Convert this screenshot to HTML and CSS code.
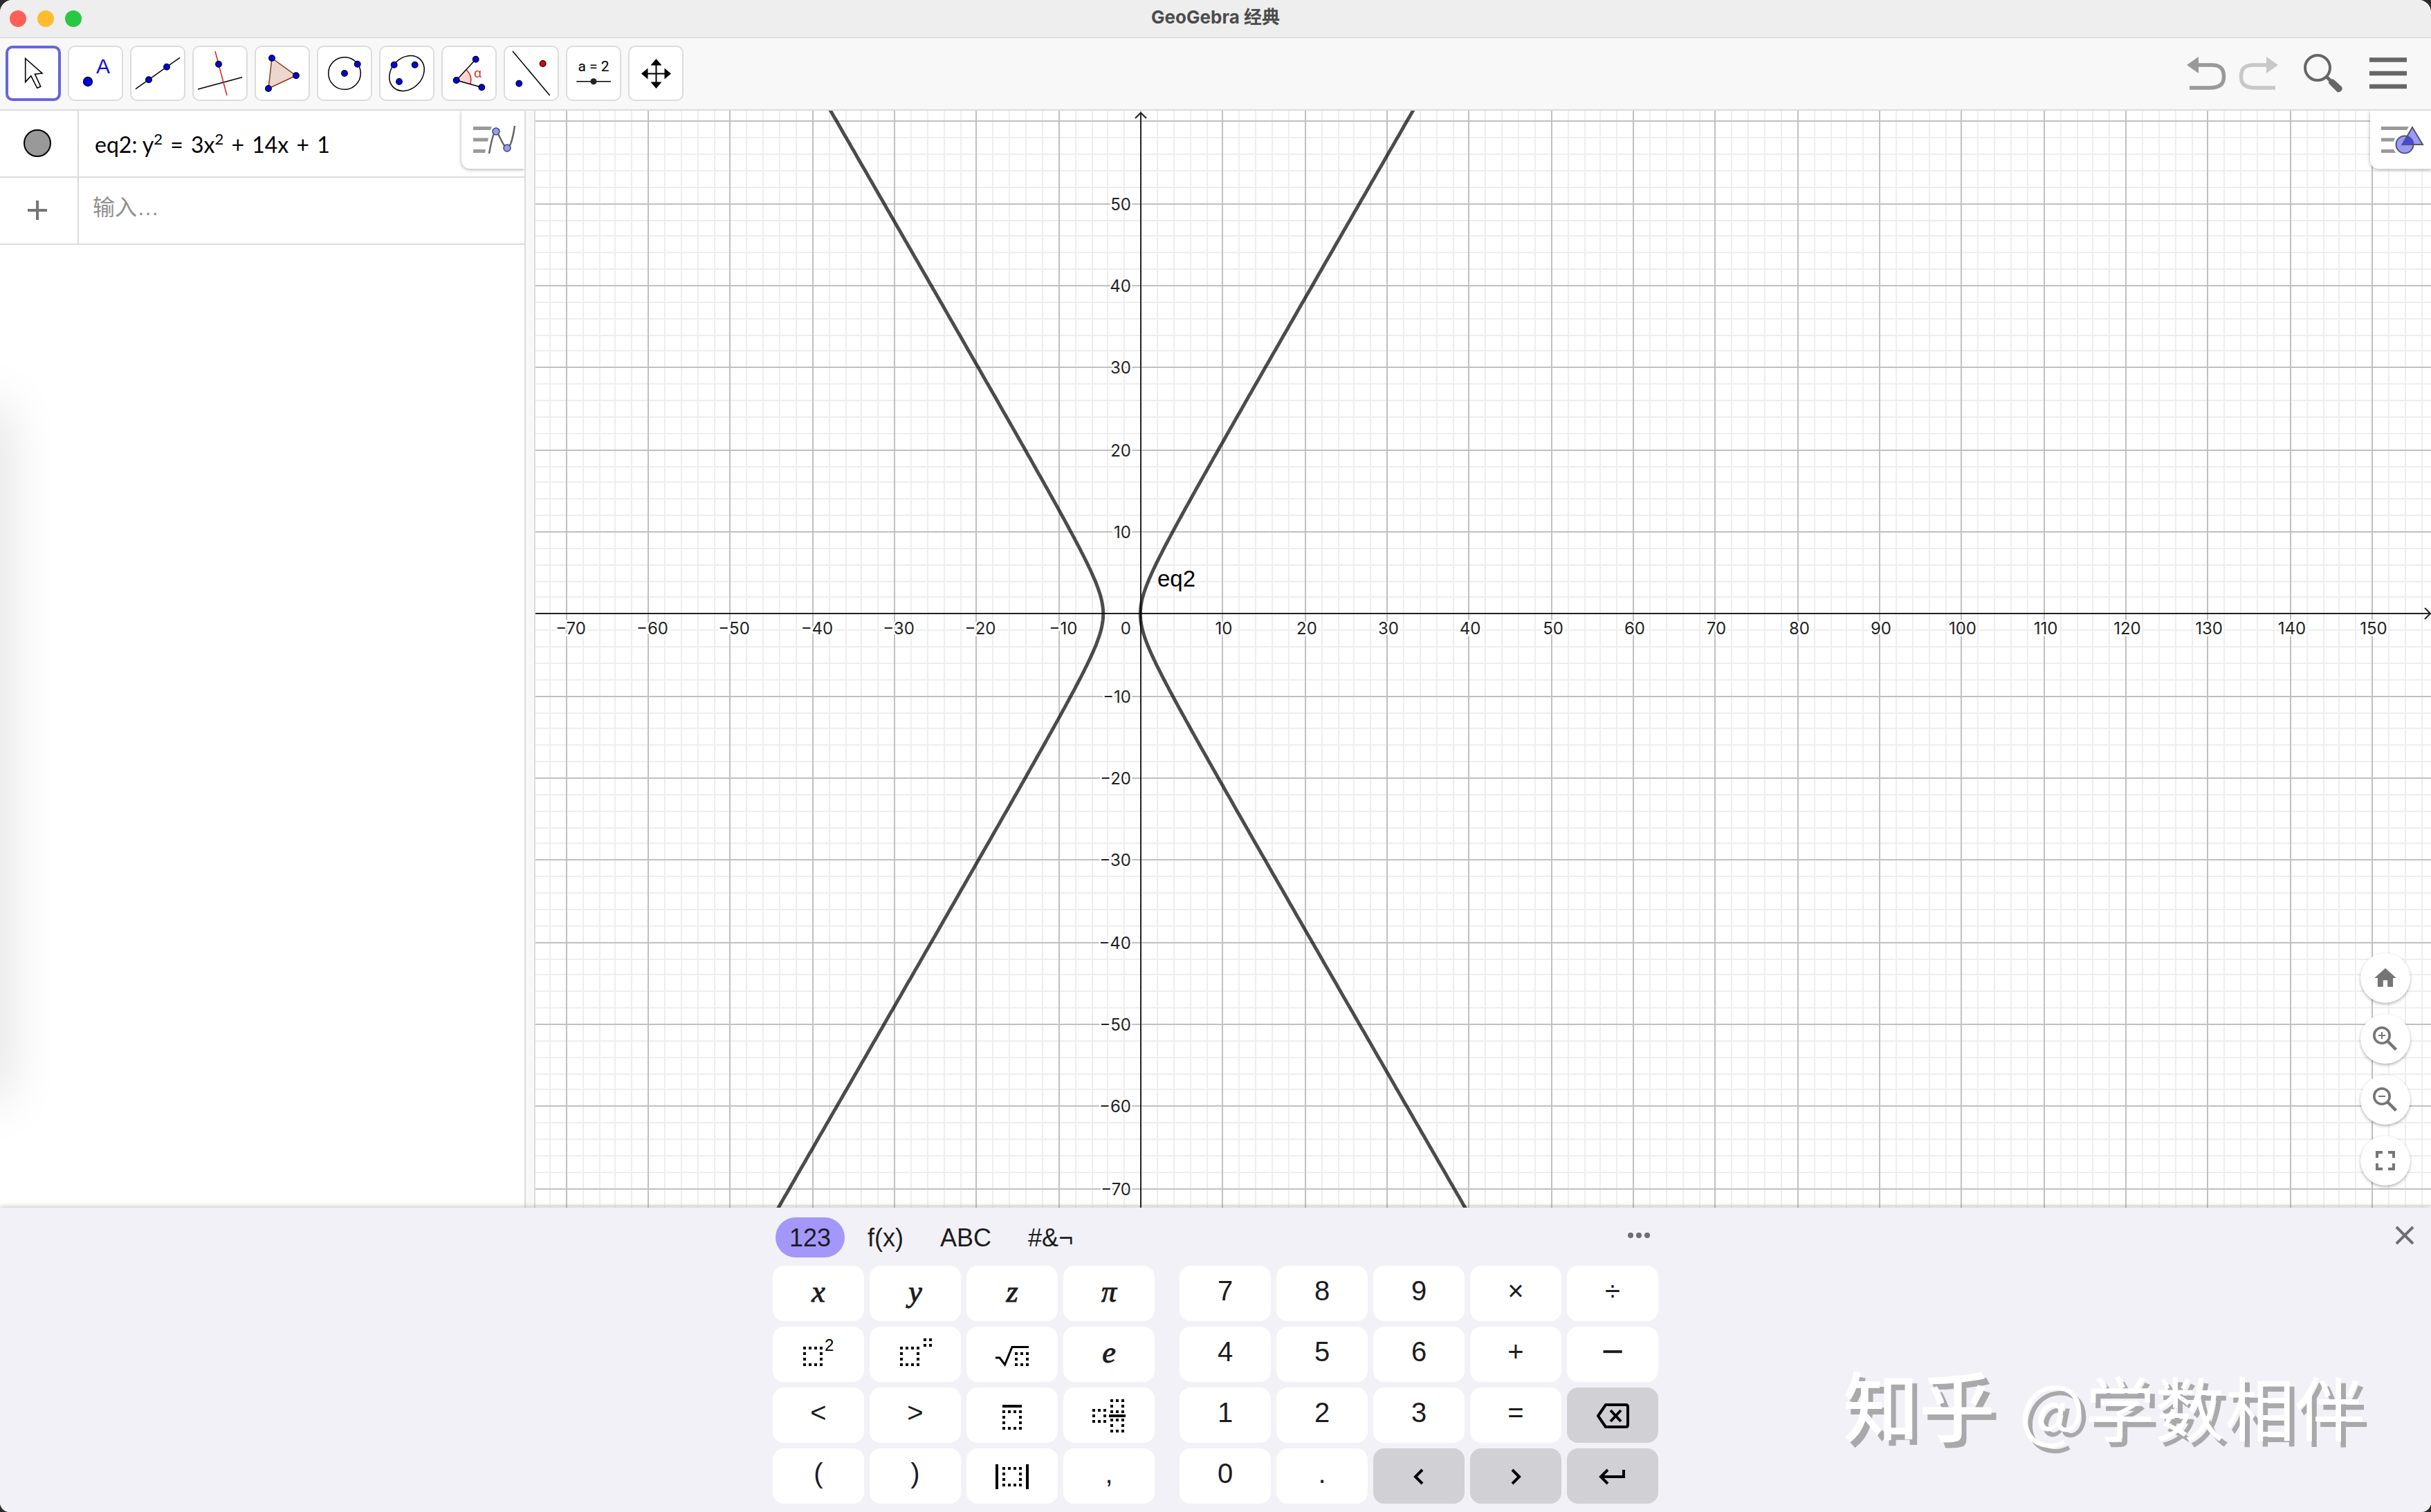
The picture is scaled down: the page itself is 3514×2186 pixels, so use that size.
FILE: index.html
```html
<!DOCTYPE html>
<html lang="zh-CN">
<head>
    <meta charset="UTF-8">
    <meta name="viewport" content="width=device-width, initial-scale=1.0">
    <title>GeoGebra 经典</title>
    <link rel="stylesheet" href="styles.css">
</head>
<body>

    <!-- Shared dotted placeholder boxes used by the keyboard icons -->
    <svg class="defs" aria-hidden="true">
        <defs>
            <path id="box4" d="M0 2h28M0 26h28M2 8v16M26 8v16" stroke="#000" stroke-width="4" stroke-dasharray="4 4" fill="none"/>
            <path id="box3" d="M0 2h20M0 18h20M2 8v4M18 8v4" stroke="#000" stroke-width="4" stroke-dasharray="4 4" fill="none"/>
        </defs>
    </svg>

    <div class="window">
        <header class="titlebar">
            <div class="lights">
                <button class="light light-close" aria-label="关闭"></button>
                <button class="light light-min" aria-label="最小化"></button>
                <button class="light light-max" aria-label="全屏"></button>
            </div>
            <h1>GeoGebra 经典</h1>
        </header>

        <!-- Toolbar -->
        <nav class="toolbar">
            <div class="tools">
                <button class="tool selected" aria-label="移动">
                    <svg viewBox="4 4 72 72"><path d="M28.7 18.5L53 40L42.5 41.2L50.7 59L45.7 61.3L36.8 43.7L28.7 52.6Z" fill="#fff" stroke="#000" stroke-width="1.6"/></svg>
                </button>
                <button class="tool" aria-label="点">
                    <svg viewBox="4 4 72 72"><circle class="pt" cx="29" cy="52" r="6.5"/><text class="tool-a" x="41" y="40">A</text></svg>
                </button>
                <button class="tool" aria-label="直线">
                    <svg viewBox="4 4 72 72"><path class="ln" d="M8 62.7L72 17.3"/><circle class="pt" cx="27" cy="49.3" r="4.3"/><circle class="pt" cx="53" cy="30.7" r="4.3"/></svg>
                </button>
                <button class="tool" aria-label="垂线">
                    <svg viewBox="4 4 72 72"><path class="ln" d="M8 63L72 45.7"/><path class="ln red" d="M33 8L50 72"/><circle class="pt" cx="38" cy="26.7" r="4.3"/></svg>
                </button>
                <button class="tool" aria-label="多边形">
                    <svg viewBox="4 4 72 72"><path d="M25 18L60 43.3L20 62Z" fill="#ecd6d0" stroke="#8b3a12" stroke-width="1.5"/><circle class="pt" cx="25" cy="18" r="4.3"/><circle class="pt" cx="60" cy="43.3" r="4.3"/><circle class="pt" cx="20" cy="62" r="4.3"/></svg>
                </button>
                <button class="tool" aria-label="圆">
                    <svg viewBox="4 4 72 72"><circle class="ln" cx="40" cy="40" r="23.3"/><circle class="pt" cx="40" cy="40" r="4.3"/><circle class="pt" cx="58.7" cy="26.7" r="4.3"/></svg>
                </button>
                <button class="tool" aria-label="椭圆">
                    <svg viewBox="4 4 72 72"><ellipse class="ln" cx="40" cy="40" rx="28" ry="22.4" transform="rotate(-46 40 40)"/><circle class="pt" cx="21.7" cy="27.7" r="4.3"/><circle class="pt" cx="51.7" cy="27.7" r="4.3"/><circle class="pt" cx="29" cy="52" r="4.3"/></svg>
                </button>
                <button class="tool" aria-label="角度">
                    <svg viewBox="4 4 72 72"><path d="M21.7 50L36.3 35A21 21 0 0 1 42.2 55Z" fill="#ffd4d4"/><path d="M36.3 35A21 21 0 0 1 42.2 55" fill="none" stroke="#d6232a" stroke-width="1.6"/><path class="ln" d="M49.7 19.7L21.7 50L58.3 60.3"/><circle class="pt" cx="21.7" cy="50" r="4.3"/><circle class="pt" cx="49.7" cy="19.7" r="4.3"/><circle class="pt" cx="58.3" cy="60.3" r="4.3"/><text class="tool-alpha" x="47" y="46">α</text></svg>
                </button>
                <button class="tool" aria-label="轴对称">
                    <svg viewBox="4 4 72 72"><path class="ln" d="M13 8L66.7 72"/><circle class="pt red-pt" cx="56.7" cy="26" r="4.3"/><circle class="pt" cx="22.3" cy="54.7" r="4.3"/></svg>
                </button>
                <button class="tool" aria-label="滑动条">
                    <svg viewBox="4 4 72 72"><text class="tool-slider" x="40" y="37" text-anchor="middle">a = 2</text><path class="ln" d="M15.3 51.7H65"/><circle cx="40" cy="51.7" r="4.5" fill="#222"/></svg>
                </button>
                <button class="tool" aria-label="平移视图">
                    <svg viewBox="4 4 72 72"><path d="M40.5 24V57M24 40.5H57" stroke="#000" stroke-width="2"/><path d="M40.5 19l8 9.5h-16zM40.5 62l8-9.5h-16zM19 40.5l9.5-8v16zM62 40.5l-9.5-8v16z"/></svg>
                </button>
            </div>
            <div class="actions">
                <button class="action" aria-label="撤销">
                    <svg class="undo" viewBox="0 0 58 54"><path d="M0 15L17 3V27Z" fill="#999"/><path d="M16 15H36C49 15 53.500 21 53.500 31.500S49 48 32 48H4" fill="none" stroke="#999" stroke-width="5.500"/></svg>
                </button>
                <button class="action redo" aria-label="重做">
                    <svg class="undo" viewBox="0 0 58 54"><path d="M58 15L41 3V27Z" fill="#c8c8c8"/><path d="M42 15H22C9 15 4.500 21 4.500 31.500S9 48 26 48H54" fill="none" stroke="#c8c8c8" stroke-width="5.500"/></svg>
                </button>
                <button class="action" aria-label="搜索">
                    <svg class="search" viewBox="0 0 58 58"><circle cx="20" cy="21" r="18" fill="none" stroke="#666" stroke-width="4"/><path d="M32 33L40 41" stroke="#666" stroke-width="5"/><path d="M36 41.500L40.500 37.500Q42 37 43.500 38L54.500 48Q57 51 54.500 54T48.500 56L37 44.500Q35.500 43 36 41.500Z" fill="#666"/></svg>
                </button>
                <button class="action" aria-label="菜单">
                    <svg class="menu" viewBox="0 0 54 46"><path d="M0 3.500H54M0 23H54M0 42H54" stroke="#666" stroke-width="6.500"/></svg>
                </button>
            </div>
        </nav>

        <main class="workspace">
            <!-- Algebra view -->
            <section class="algebra">
                <div class="row">
                    <div class="row-head">
                        <button class="marble" aria-label="显示或隐藏 eq2"></button>
                    </div>
                    <div class="expression">eq2: y<sup>2</sup> <i class="op">=</i> 3x<sup>2</sup> <i class="op">+</i> 14x <i class="op">+</i> 1</div>
                    <button class="style-btn" aria-label="代数区样式">
                        <svg viewBox="0 0 91 84"><path d="M17 23h27l-2 5H17zM17 39.500h22l-1 5H17zM17 56h18l-1 5H17z" fill="#999"/><path d="M40 62C44 40 47 30 50 30S61 54 66 54S75 36 77 22" fill="none" stroke="#666" stroke-width="2.500"/><circle cx="50" cy="30" r="5" fill="#9999f5" stroke="#444466" stroke-width="1.500"/><circle cx="66" cy="54" r="5" fill="#9999f5" stroke="#444466" stroke-width="1.500"/></svg>
                    </button>
                </div>
                <div class="row">
                    <div class="row-head">
                        <svg class="plus" viewBox="0 0 28 28"><path d="M14 0V28M0 14H28" stroke="#757575" stroke-width="4"/></svg>
                    </div>
                    <input class="new-input" type="text" placeholder="输入…" aria-label="输入">
                </div>
            </section>

            <div class="splitter"></div>

            <!-- Graphics view -->
            <section class="graphics">
                <svg id="plot" class="plot"></svg>
                <button class="style-btn" aria-label="绘图区样式">
                    <svg viewBox="0 0 88 84"><path d="M16 23h40l-3 5H16zM16 39.500h20l-2 5H16zM16 56h18l3 5H16z" fill="#999"/><circle cx="50" cy="49" r="12.500" fill="#9999ff"/><path d="M61 24L76 49H46.500Z" fill="#9999ff"/><path d="M54 37.500A12.500 12.500 0 0 1 62.500 49H46.500Z" fill="#4545f0"/><g fill="none" stroke="#555566" stroke-width="2"><circle cx="50" cy="49" r="12.500"/><path d="M61 24L76 49H46.500Z"/></g></svg>
                </button>
                <div class="view-buttons">
                    <button class="round" aria-label="标准视图">
                        <svg class="icon-home" viewBox="0 0 24 24"><path d="M10 20v-6h4v6h5v-8h3L12 3 2 12h3v8z" fill="#757575"/></svg>
                    </button>
                    <button class="round" aria-label="放大">
                        <svg class="icon-zoom" viewBox="-20 -20 40 40"><g fill="none" stroke="#757575"><circle cx="-5" cy="-5" r="11.200" stroke-width="3.600"/><path d="M3.500 3.500L15.500 15.500" stroke-width="4.500"/><path d="M-10 -5H0M-5 -10V0" stroke-width="2"/></g></svg>
                    </button>
                    <button class="round" aria-label="缩小">
                        <svg class="icon-zoom" viewBox="-20 -20 40 40"><g fill="none" stroke="#757575"><circle cx="-5" cy="-5" r="11.200" stroke-width="3.600"/><path d="M3.500 3.500L15.500 15.500" stroke-width="4.500"/><path d="M-10 -5H0" stroke-width="2"/></g></svg>
                    </button>
                    <button class="round" aria-label="全屏">
                        <svg class="icon-full" viewBox="0 0 24 24"><path d="M7 14H5v5h5v-2H7v-3zm-2-4h2V7h3V5H5v5zm12 7h-3v2h5v-5h-2v3zM14 5v2h3v3h2V5h-5z" fill="#757575"/></svg>
                    </button>
                </div>
            </section>
        </main>

        <!-- On-screen keyboard -->
        <section class="keyboard">
            <button class="close" aria-label="关闭键盘">
                <svg viewBox="0 0 28 28"><path d="M2 2L26 26M26 2L2 26" stroke="#6e6e73" stroke-width="4"/></svg>
            </button>
            <div class="keyboard-inner">
                <div class="tabs">
                    <button class="tab active">123</button>
                    <button class="tab">f(x)</button>
                    <button class="tab">ABC</button>
                    <button class="tab">#&amp;¬</button>
                    <button class="more" aria-label="更多">
                        <svg viewBox="0 0 34 10"><g fill="#6e6e73"><circle cx="5" cy="5" r="4"/><circle cx="17" cy="5" r="4"/><circle cx="29" cy="5" r="4"/></g></svg>
                    </button>
                </div>
                <div class="pads">
                    <div class="pad pad-math">
                        <button class="key math">x</button>
                        <button class="key math">y</button>
                        <button class="key math">z</button>
                        <button class="key math">π</button>
                        <button class="key icon" aria-label="平方"><svg viewBox="-32 -32 64 64"><use href="#box4" x="-22" y="-11"/><text class="exp" x="9" y="-5">2</text></svg></button>
                        <button class="key icon" aria-label="幂"><svg viewBox="-32 -32 64 64"><use href="#box4" x="-22" y="-11"/><path d="M12 -21h12M12 -13h12" stroke="#000" stroke-width="4" stroke-dasharray="4 4"/></svg></button>
                        <button class="key icon" aria-label="平方根"><svg viewBox="-32 -32 64 64"><path d="M-24 5H-18L-10.500 15L0 -10.500H24" fill="none" stroke="#000" stroke-width="3"/><use href="#box3" x="4" y="-3"/></svg></button>
                        <button class="key math">e</button>
                        <button class="key">&lt;</button>
                        <button class="key">&gt;</button>
                        <button class="key icon" aria-label="循环小数"><svg viewBox="-32 -32 64 64"><path d="M-14 -13H14" stroke="#000" stroke-width="4"/><use href="#box4" x="-14" y="-7"/></svg></button>
                        <button class="key icon" aria-label="带分数"><svg viewBox="-32 -32 64 64"><use href="#box3" x="-24" y="-9"/><use href="#box3" x="2" y="-23"/><path d="M0 1H24" stroke="#000" stroke-width="4"/><use href="#box3" x="2" y="5"/></svg></button>
                        <button class="key">(</button>
                        <button class="key">)</button>
                        <button class="key icon" aria-label="绝对值"><svg viewBox="-32 -32 64 64"><path d="M-22 -17V19M22 -17V19" stroke="#000" stroke-width="4"/><use href="#box4" x="-14" y="-13"/></svg></button>
                        <button class="key">,</button>
                    </div>
                    <div class="pad pad-num">
                        <button class="key">7</button>
                        <button class="key">8</button>
                        <button class="key">9</button>
                        <button class="key">×</button>
                        <button class="key">÷</button>
                        <button class="key">4</button>
                        <button class="key">5</button>
                        <button class="key">6</button>
                        <button class="key">+</button>
                        <button class="key minus">−</button>
                        <button class="key">1</button>
                        <button class="key">2</button>
                        <button class="key">3</button>
                        <button class="key">=</button>
                        <button class="key icon dark" aria-label="退格"><svg viewBox="-32 -32 64 64"><g fill="none" stroke="#000" stroke-width="4"><path d="M-10 -15H19Q22 -15 22 -12V14Q22 17 19 17H-10L-21 1Z" stroke-linejoin="round"/><path d="M-3 -7L12 9M12 -7L-3 9"/></g></svg></button>
                        <button class="key">0</button>
                        <button class="key">.</button>
                        <button class="key icon dark" aria-label="左"><svg viewBox="-32 -32 64 64"><path d="M5 -9L-5 1L5 11" fill="none" stroke="#000" stroke-width="4"/></svg></button>
                        <button class="key icon dark" aria-label="右"><svg viewBox="-32 -32 64 64"><path d="M-5 -9L5 1L-5 11" fill="none" stroke="#000" stroke-width="4"/></svg></button>
                        <button class="key icon dark" aria-label="回车"><svg viewBox="-32 -32 64 64"><path d="M-7 -9L-17 1L-7 11M-17 1H16V-9" fill="none" stroke="#000" stroke-width="4"/></svg></button>
                    </div>
                </div>
            </div>
            <div class="watermark"><b>知乎</b> @学数相伴</div>
        </section>
    </div>

    <script src="plot.js"></script>
</body>
</html>
```

FILE: styles.css
```css
* {
    box-sizing: border-box;
}

body {
    margin: 0;
    background-color: #2b2b2b;
    font-family: "Liberation Sans", "Noto Sans CJK SC", sans-serif;
    color: #1c1c1f;
}

button {
    margin: 0;
    padding: 0;
    border: none;
    background: none;
    font-family: inherit;
    color: inherit;
    cursor: pointer;
}

svg {
    display: block;
}

.defs {
    position: absolute;
    width: 0;
    height: 0;
}

.window {
    display: flex;
    flex-direction: column;
    min-height: 100vh;
    border-radius: 18px 18px 14px 14px;
    overflow: hidden;
    background-color: #fff;
}

/* Title bar */
.titlebar {
    display: grid;
    grid-template-columns: 1fr auto 1fr;
    align-items: center;
    height: 55px;
    padding: 0 14px;
    background-color: #eee;
    border-bottom: 1px solid #d2d2d2;
}

.titlebar h1 {
    margin: 0;
    padding-bottom: 4px;
    font-family: Inter, "Noto Sans CJK SC", sans-serif;
    font-size: 26px;
    line-height: 32px;
    font-weight: 700;
    color: #4c4c4c;
}

.lights {
    display: flex;
    gap: 16px;
}

.light {
    width: 24px;
    height: 24px;
    border-radius: 50%;
}

.light-close { background-color: #ff5f57; }
.light-min { background-color: #febc2e; }
.light-max { background-color: #28c840; }

/* Toolbar */
.toolbar {
    display: flex;
    justify-content: space-between;
    align-items: center;
    height: 105px;
    padding: 0 35px 2px 8px;
    background-color: #f8f8f8;
    border-bottom: 2px solid #dcdcdc;
}

.tools {
    display: flex;
    gap: 10px;
}

.tool {
    display: flex;
    align-items: center;
    justify-content: center;
    width: 80px;
    height: 80px;
    background-color: #fff;
    border: 2px solid #dcdcdc;
    border-radius: 10px;
}

.tool.selected {
    border: 4px solid #6565e0;
}

.tool svg {
    flex: none;
    width: 72px;
    height: 72px;
}

.ln {
    fill: none;
    stroke: #000;
    stroke-width: 1.5px;
}

.ln.red {
    stroke: #d6232a;
}

.pt {
    fill: #0000e6;
    stroke: #000;
    stroke-width: 1.3px;
}

.red-pt {
    fill: #e60000;
}

.tool-a {
    font-size: 30px;
    fill: #1010d8;
}

.tool-alpha {
    font-family: "Open Sans", sans-serif;
    font-size: 18px;
    fill: #d6232a;
}

.tool-slider {
    font-family: Roboto, sans-serif;
    font-size: 21px;
}

.actions {
    display: flex;
    align-items: center;
    gap: 37px;
}

.redo {
    margin-left: -21px;
}

.undo {
    width: 58px;
    height: 54px;
}

.search {
    width: 58px;
    height: 58px;
}

.menu {
    width: 54px;
    height: 46px;
}

/* Main area */
.workspace {
    flex: 1;
    display: grid;
    grid-template-columns: 758px 16px 1fr;
}

.algebra {
    position: relative;
    overflow: hidden;
}

/* Soft shadow falling in from the left edge */
.algebra::before {
    content: "";
    position: absolute;
    top: 27%;
    bottom: 10%;
    left: -40px;
    width: 40px;
    box-shadow: 0 0 80px rgba(0, 0, 0, 0.2);
}

.row {
    position: relative;
    display: flex;
    height: 97px;
    border-bottom: 2px solid #dcdcdc;
}

.row-head {
    display: flex;
    align-items: center;
    justify-content: center;
    width: 114px;
    padding: 0 4px 2px 0;
    border-right: 2px solid #dcdcdc;
}

.marble {
    width: 40px;
    height: 40px;
    border: 2px solid #000;
    border-radius: 50%;
    background-color: #999;
}

.plus {
    width: 28px;
    height: 28px;
}

.expression {
    padding-left: 23px;
    font-family: Lato, sans-serif;
    font-size: 32px;
    line-height: 97px;
    color: #000;
    white-space: nowrap;
}

.expression sup {
    font-size: 22px;
    line-height: 0;
}

.expression .op {
    padding: 0 3px;
    font-style: normal;
}

.new-input {
    flex: 1;
    min-width: 0;
    padding: 0 0 8px 20px;
    border: none;
    outline: none;
    background: none;
    font-family: "Liberation Sans", "Noto Sans CJK SC", sans-serif;
    font-size: 32px;
}

.new-input::placeholder {
    color: #8f8f8f;
    opacity: 1;
}

.style-btn {
    position: absolute;
    top: 0;
    right: 0;
    background-color: #fff;
    border-bottom-left-radius: 12px;
    box-shadow: 0 1px 5px rgba(0, 0, 0, 0.35);
}

.style-btn svg {
    height: 84px;
}

.splitter {
    background-color: #f8f8f8;
    border-left: 2px solid #dcdcdc;
    border-right: 2px solid #dcdcdc;
}

.graphics {
    position: relative;
    overflow: hidden;
}

.plot {
    position: absolute;
    width: 100%;
    height: 100%;
}

.minor {
    stroke: #eee;
    stroke-width: 2px;
}

.major {
    stroke: #c0c0c0;
    stroke-width: 2px;
}

.axis {
    fill: none;
    stroke: #222;
    stroke-width: 2px;
}

.curve {
    fill: none;
    stroke: #000;
    stroke-opacity: 0.7;
    stroke-width: 5px;
}

.tick {
    font-family: Inter, sans-serif;
    font-size: 24px;
    fill: #222;
    stroke: #fff;
    stroke-width: 5px;
    paint-order: stroke;
}

.curve-label {
    font-size: 33px;
    fill: #000;
}

.view-buttons {
    position: absolute;
    right: 30px;
    bottom: 32px;
    display: flex;
    flex-direction: column;
    gap: 16px;
}

.round {
    display: flex;
    align-items: center;
    justify-content: center;
    width: 72px;
    height: 72px;
    border-radius: 50%;
    background-color: #fff;
    box-shadow: 0 2px 4px rgba(0, 0, 0, 0.3);
}

.icon-home {
    width: 38px;
    height: 38px;
}

.icon-zoom {
    width: 40px;
    height: 40px;
}

.icon-full {
    width: 48px;
    height: 48px;
}

/* Keyboard */
.keyboard {
    position: relative;
    padding: 14px 16px 12px;
    background-color: #f2f1f7;
    box-shadow: 0 0 8px rgba(0, 0, 0, 0.3);
}

.keyboard-inner {
    max-width: 1280px;
    margin: 0 auto;
}

.tabs {
    display: flex;
    gap: 13px;
    margin-bottom: 12px;
    padding: 0 11px 0 4px;
}

.tab {
    height: 58px;
    padding: 1px 20px 0;
    border-radius: 29px;
    font-size: 36px;
    line-height: 58px;
}

.tab.active {
    background-color: #a397fa;
}

.more {
    margin-left: auto;
    padding-bottom: 6px;
}

.more svg {
    width: 34px;
    height: 10px;
}

.close {
    position: absolute;
    top: 26px;
    right: 24px;
}

.close svg {
    width: 28px;
    height: 28px;
}

.pads {
    display: grid;
    grid-template-columns: 552fr 692fr;
    gap: 36px;
}

.pad {
    display: grid;
    gap: 8px;
}

.pad-math {
    grid-template-columns: repeat(4, 1fr);
}

.pad-num {
    grid-template-columns: repeat(5, 1fr);
}

.key {
    display: flex;
    align-items: center;
    justify-content: center;
    height: 80px;
    padding-bottom: 8px;
    border-radius: 16px;
    background-color: #fff;
    font-size: 40px;
    line-height: 48px;
}

.key.math {
    padding-bottom: 4px;
    font-family: "Liberation Serif", serif;
    font-style: italic;
    font-size: 44px;
    -webkit-text-stroke: 1px #1c1c1f;
}

.key.minus {
    font-size: 56px;
}

.key.icon {
    padding-bottom: 0;
}

.key.icon svg {
    width: 64px;
    height: 64px;
}

.key.dark {
    background-color: #d1d0d5;
}

.exp {
    font-size: 24px;
}

.watermark {
    position: absolute;
    right: 96px;
    bottom: 80px;
    font-family: "Noto Sans CJK SC", sans-serif;
    font-size: 101px;
    line-height: 148px;
    color: #fff;
    text-shadow: 7px 8px 0 #a9a9ab;
    white-space: nowrap;
    pointer-events: none;
}

.watermark b {
    padding-right: 12px;
    font-size: 110px;
    font-weight: 500;
}
```

FILE: plot.js
```js
// --- View settings ---
const plot = document.getElementById('plot');
const UNIT = 356 / 30;      // pixels per unit
const ORIGIN_X = 874.2;
const ORIGIN_Y = 726.6;

// --- Helpers ---
function add(tag, attrs, text) {
    const el = document.createElementNS('http://www.w3.org/2000/svg', tag);
    for (const key in attrs) {
        el.setAttribute(key, attrs[key]);
    }
    if (text !== undefined) {
        el.textContent = text;
    }
    plot.appendChild(el);
}

// Snap to the middle of a two pixel line
function snap(value) {
    return Math.round(value / 2) * 2 + 1;
}

const px = x => ORIGIN_X + x * UNIT;
const py = y => ORIGIN_Y - y * UNIT;

// One branch of y^2 = 3x^2 + 14x + 1, solved for x
function branch(sign) {
    const points = [];
    for (let y = -76; y <= 76; y += 0.25) {
        const x = (-14 + sign * Math.sqrt(196 - 12 * (1 - y * y))) / 6;
        points.push(`${(px(x) + 1).toFixed(1)} ${(py(y) + 1).toFixed(1)}`);
    }
    return 'M' + points.join('L');
}

function label(n) {
    return n < 0 ? '−' + -n : String(n);
}

function draw() {
    const width = plot.clientWidth;
    const height = plot.clientHeight;
    plot.textContent = '';

    const left = Math.ceil(-ORIGIN_X / UNIT / 2) * 2;
    const right = (width - ORIGIN_X) / UNIT;
    const bottom = Math.ceil((ORIGIN_Y - height) / UNIT / 2) * 2;
    const top = ORIGIN_Y / UNIT;

    // Grid, minor lines first
    for (const type of ['minor', 'major']) {
        for (let x = left; x <= right; x += 2) {
            if ((x % 10 === 0) === (type === 'major')) {
                add('path', { class: type, d: `M${snap(px(x))} 0V${height}` });
            }
        }
        for (let y = bottom; y <= top; y += 2) {
            if ((y % 10 === 0) === (type === 'major')) {
                add('path', { class: type, d: `M0 ${snap(py(y))}H${width}` });
            }
        }
    }

    // Axes with arrow heads
    const ax = snap(px(0));
    const ay = snap(py(0));
    add('path', { class: 'axis', d: `M${ax} ${height}V3M${ax - 8} 11L${ax} 3L${ax + 8} 11` });
    add('path', { class: 'axis', d: `M0 ${ay}H${width - 1}M${width - 9} ${ay - 8}L${width - 1} ${ay}L${width - 9} ${ay + 8}` });

    // Tick labels
    for (let x = Math.ceil(left / 10) * 10; x <= right; x += 10) {
        if (x !== 0) {
            add('text', { class: 'tick', x: snap(px(x)) + (x < 0 ? 6 : 2), y: ay + 30, 'text-anchor': 'middle' }, label(x));
        }
    }
    for (let y = Math.ceil(bottom / 10) * 10; y < top - 5; y += 10) {
        add('text', { class: 'tick', x: ax - 14, y: snap(py(y)) + (y === 0 ? 30 : 9), 'text-anchor': 'end' }, label(y));
    }

    add('path', { class: 'curve', d: branch(-1) });
    add('path', { class: 'curve', d: branch(1) });
    add('text', { class: 'curve-label', x: ax + 24, y: ay - 39 }, 'eq2');
}

draw();
window.addEventListener('resize', draw);
```
